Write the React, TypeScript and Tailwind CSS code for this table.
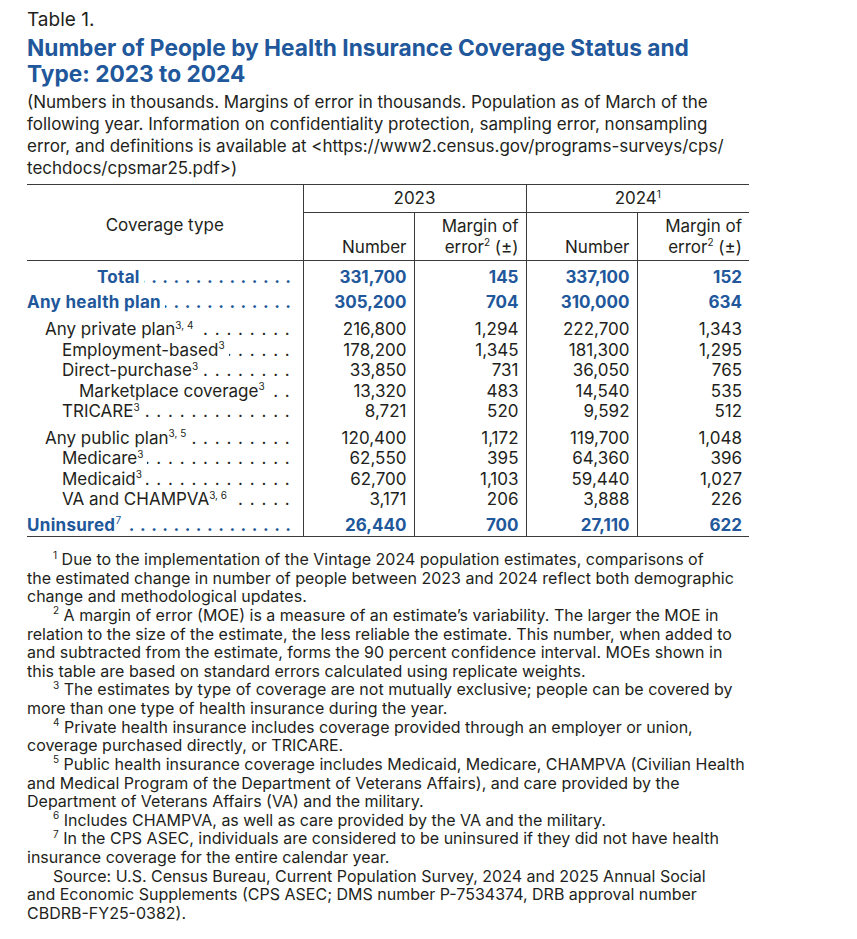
import React from "react"

const BLUE = "text-[#21579b]"

type Row = {
  label: string
  sup?: string
  indent: string
  bold?: boolean
  rowCls: string
  vals: string[]
}

const rows: Row[] = [
  { label: "Total", indent: "pl-[70px]", bold: true, rowCls: "pt-[6px] pb-[4px]", vals: ["331,700", "145", "337,100", "152"] },
  { label: "Any health plan", indent: "pl-0", bold: true, rowCls: "", vals: ["305,200", "704", "310,000", "634"] },
  { label: "Any private plan", sup: "3, 4", indent: "pl-[18px]", rowCls: "pt-[7px]", vals: ["216,800", "1,294", "222,700", "1,343"] },
  { label: "Employment-based", sup: "3", indent: "pl-[35px]", rowCls: "", vals: ["178,200", "1,345", "181,300", "1,295"] },
  { label: "Direct-purchase", sup: "3", indent: "pl-[35px]", rowCls: "", vals: ["33,850", "731", "36,050", "765"] },
  { label: "Marketplace coverage", sup: "3", indent: "pl-[52px]", rowCls: "", vals: ["13,320", "483", "14,540", "535"] },
  { label: "TRICARE", sup: "3", indent: "pl-[35px]", rowCls: "", vals: ["8,721", "520", "9,592", "512"] },
  { label: "Any public plan", sup: "3, 5", indent: "pl-[18px]", rowCls: "pt-[6px]", vals: ["120,400", "1,172", "119,700", "1,048"] },
  { label: "Medicare", sup: "3", indent: "pl-[35px]", rowCls: "", vals: ["62,550", "395", "64,360", "396"] },
  { label: "Medicaid", sup: "3", indent: "pl-[35px]", rowCls: "", vals: ["62,700", "1,103", "59,440", "1,027"] },
  { label: "VA and CHAMPVA", sup: "3, 6", indent: "pl-[35px]", rowCls: "", vals: ["3,171", "206", "3,888", "226"] },
  { label: "Uninsured", sup: "7", indent: "pl-0", bold: true, rowCls: "pt-[5px] pb-[1px]", vals: ["26,440", "700", "27,110", "622"] },
]

const notes: { n?: string; lines: string[] }[] = [
  {
    n: "1",
    lines: [
      "Due to the implementation of the Vintage 2024 population estimates, comparisons of",
      "the estimated change in number of people between 2023 and 2024 reflect both demographic",
      "change and methodological updates.",
    ],
  },
  {
    n: "2",
    lines: [
      "A margin of error (MOE) is a measure of an estimate\u2019s variability. The larger the MOE in",
      "relation to the size of the estimate, the less reliable the estimate. This number, when added to",
      "and subtracted from the estimate, forms the 90 percent confidence interval. MOEs shown in",
      "this table are based on standard errors calculated using replicate weights.",
    ],
  },
  {
    n: "3",
    lines: [
      "The estimates by type of coverage are not mutually exclusive; people can be covered by",
      "more than one type of health insurance during the year.",
    ],
  },
  {
    n: "4",
    lines: [
      "Private health insurance includes coverage provided through an employer or union,",
      "coverage purchased directly, or TRICARE.",
    ],
  },
  {
    n: "5",
    lines: [
      "Public health insurance coverage includes Medicaid, Medicare, CHAMPVA (Civilian Health",
      "and Medical Program of the Department of Veterans Affairs), and care provided by the",
      "Department of Veterans Affairs (VA) and the military.",
    ],
  },
  {
    n: "6",
    lines: ["Includes CHAMPVA, as well as care provided by the VA and the military."],
  },
  {
    n: "7",
    lines: [
      "In the CPS ASEC, individuals are considered to be uninsured if they did not have health",
      "insurance coverage for the entire calendar year.",
    ],
  },
  {
    lines: [
      "Source: U.S. Census Bureau, Current Population Survey, 2024 and 2025 Annual Social",
      "and Economic Supplements (CPS ASEC; DMS number P-7534374, DRB approval number",
      "CBDRB-FY25-0382).",
    ],
  },
]

const DOTS = ". ".repeat(36)

function Sup({ children }: { children: React.ReactNode }) {
  return (
    <sup className="text-[10px] leading-[0] top-[-0.65em] font-normal align-baseline relative">
      {children}
    </sup>
  )
}

function Label({ row }: { row: Row }) {
  return (
    <div className={`flex items-center pr-[6px] ${row.indent}`}>
      <span className={`whitespace-nowrap shrink-0 ${row.bold ? "tracking-[0.3px]" : ""}`}>
        {row.label}
        {row.sup && <Sup>{row.sup}</Sup>}
      </span>
      <span className="flex-1 min-w-0 overflow-hidden flex justify-end ml-[4px]">
        <span className="shrink-0 whitespace-pre tracking-[1px]">{DOTS}</span>
      </span>
    </div>
  )
}

export default function App() {
  return (
    <div className="min-h-screen bg-white text-[#231f20] font-['Inter',sans-serif]">
      <div className="pl-[27px] pt-[8px] w-[820px]">
        <div className="text-[19px] leading-[24px]">Table 1.</div>
        <h1 className={`text-[22.7px] leading-[26px] font-bold ${BLUE} mt-[3px]`}>
          Number of People by Health Insurance Coverage Status and
          <br />
          Type: 2023 to 2024
        </h1>
        <p className="text-[17px] leading-[22px] mt-[4px] whitespace-nowrap">
          (Numbers in thousands. Margins of error in thousands. Population as of March of the
          <br />
          following year. Information on confidentiality protection, sampling error, nonsampling
          <br />
          error, and definitions is available at &lt;https://www2.census.gov/programs-surveys/cps/
          <br />
          techdocs/cpsmar25.pdf&gt;)
        </p>

        <table className="mt-[5px] border-collapse table-fixed w-[722px] text-[17px] leading-[20.5px] border-t border-b border-[#3a3a3a]">
          <colgroup>
            <col className="w-[276px]" />
            <col className="w-[111px]" />
            <col className="w-[112px]" />
            <col className="w-[111px]" />
            <col className="w-[112px]" />
          </colgroup>
          <thead>
            <tr className="h-[28px]">
              <td rowSpan={2} className="text-center align-middle border-b border-[#3a3a3a] pt-[5px]">
                Coverage type
              </td>
              <td colSpan={2} className="text-center border-l border-b border-[#3a3a3a]">
                2023
              </td>
              <td colSpan={2} className="text-center border-l border-b border-[#3a3a3a]">
                2024<Sup>1</Sup>
              </td>
            </tr>
            <tr className="h-[48px] border-b border-[#3a3a3a]">
              <td className="text-right align-bottom pr-[7px] pb-[3px] border-l border-[#3a3a3a]">Number</td>
              <td className="text-right align-bottom pr-[7px] pb-[3px] border-l border-[#3a3a3a]">
                Margin of
                <br />
                error<Sup>2</Sup> (±)
              </td>
              <td className="text-right align-bottom pr-[7px] pb-[3px] border-l border-[#3a3a3a]">Number</td>
              <td className="text-right align-bottom pr-[7px] pb-[3px] border-l border-[#3a3a3a]">
                Margin of
                <br />
                error<Sup>2</Sup> (±)
              </td>
            </tr>
          </thead>
          <tbody>
            {rows.map((r) => (
              <tr key={r.label} className={r.bold ? `font-bold ${BLUE}` : ""}>
                <td className={`p-0 align-top ${r.rowCls}`}>
                  <Label row={r} />
                </td>
                {r.vals.map((v, i) => (
                  <td
                    key={i}
                    className={`align-top text-right pr-[7px] border-l border-[#3a3a3a] ${r.rowCls}`}
                  >
                    {v}
                  </td>
                ))}
              </tr>
            ))}
          </tbody>
        </table>

        <div className="mt-[13px] text-[16px] leading-[18.63px] whitespace-nowrap">
          {notes.map((n, i) => (
            <div key={i}>
              {n.lines.map((l, j) => (
                <div key={j} className={`h-[18.63px] ${j === 0 ? "pl-[26px]" : ""}`}>
                  {j === 0 && n.n && (
                    <>
                      <Sup>{n.n}</Sup>{" "}
                    </>
                  )}
                  {l}
                </div>
              ))}
            </div>
          ))}
        </div>
      </div>
    </div>
  )
}
